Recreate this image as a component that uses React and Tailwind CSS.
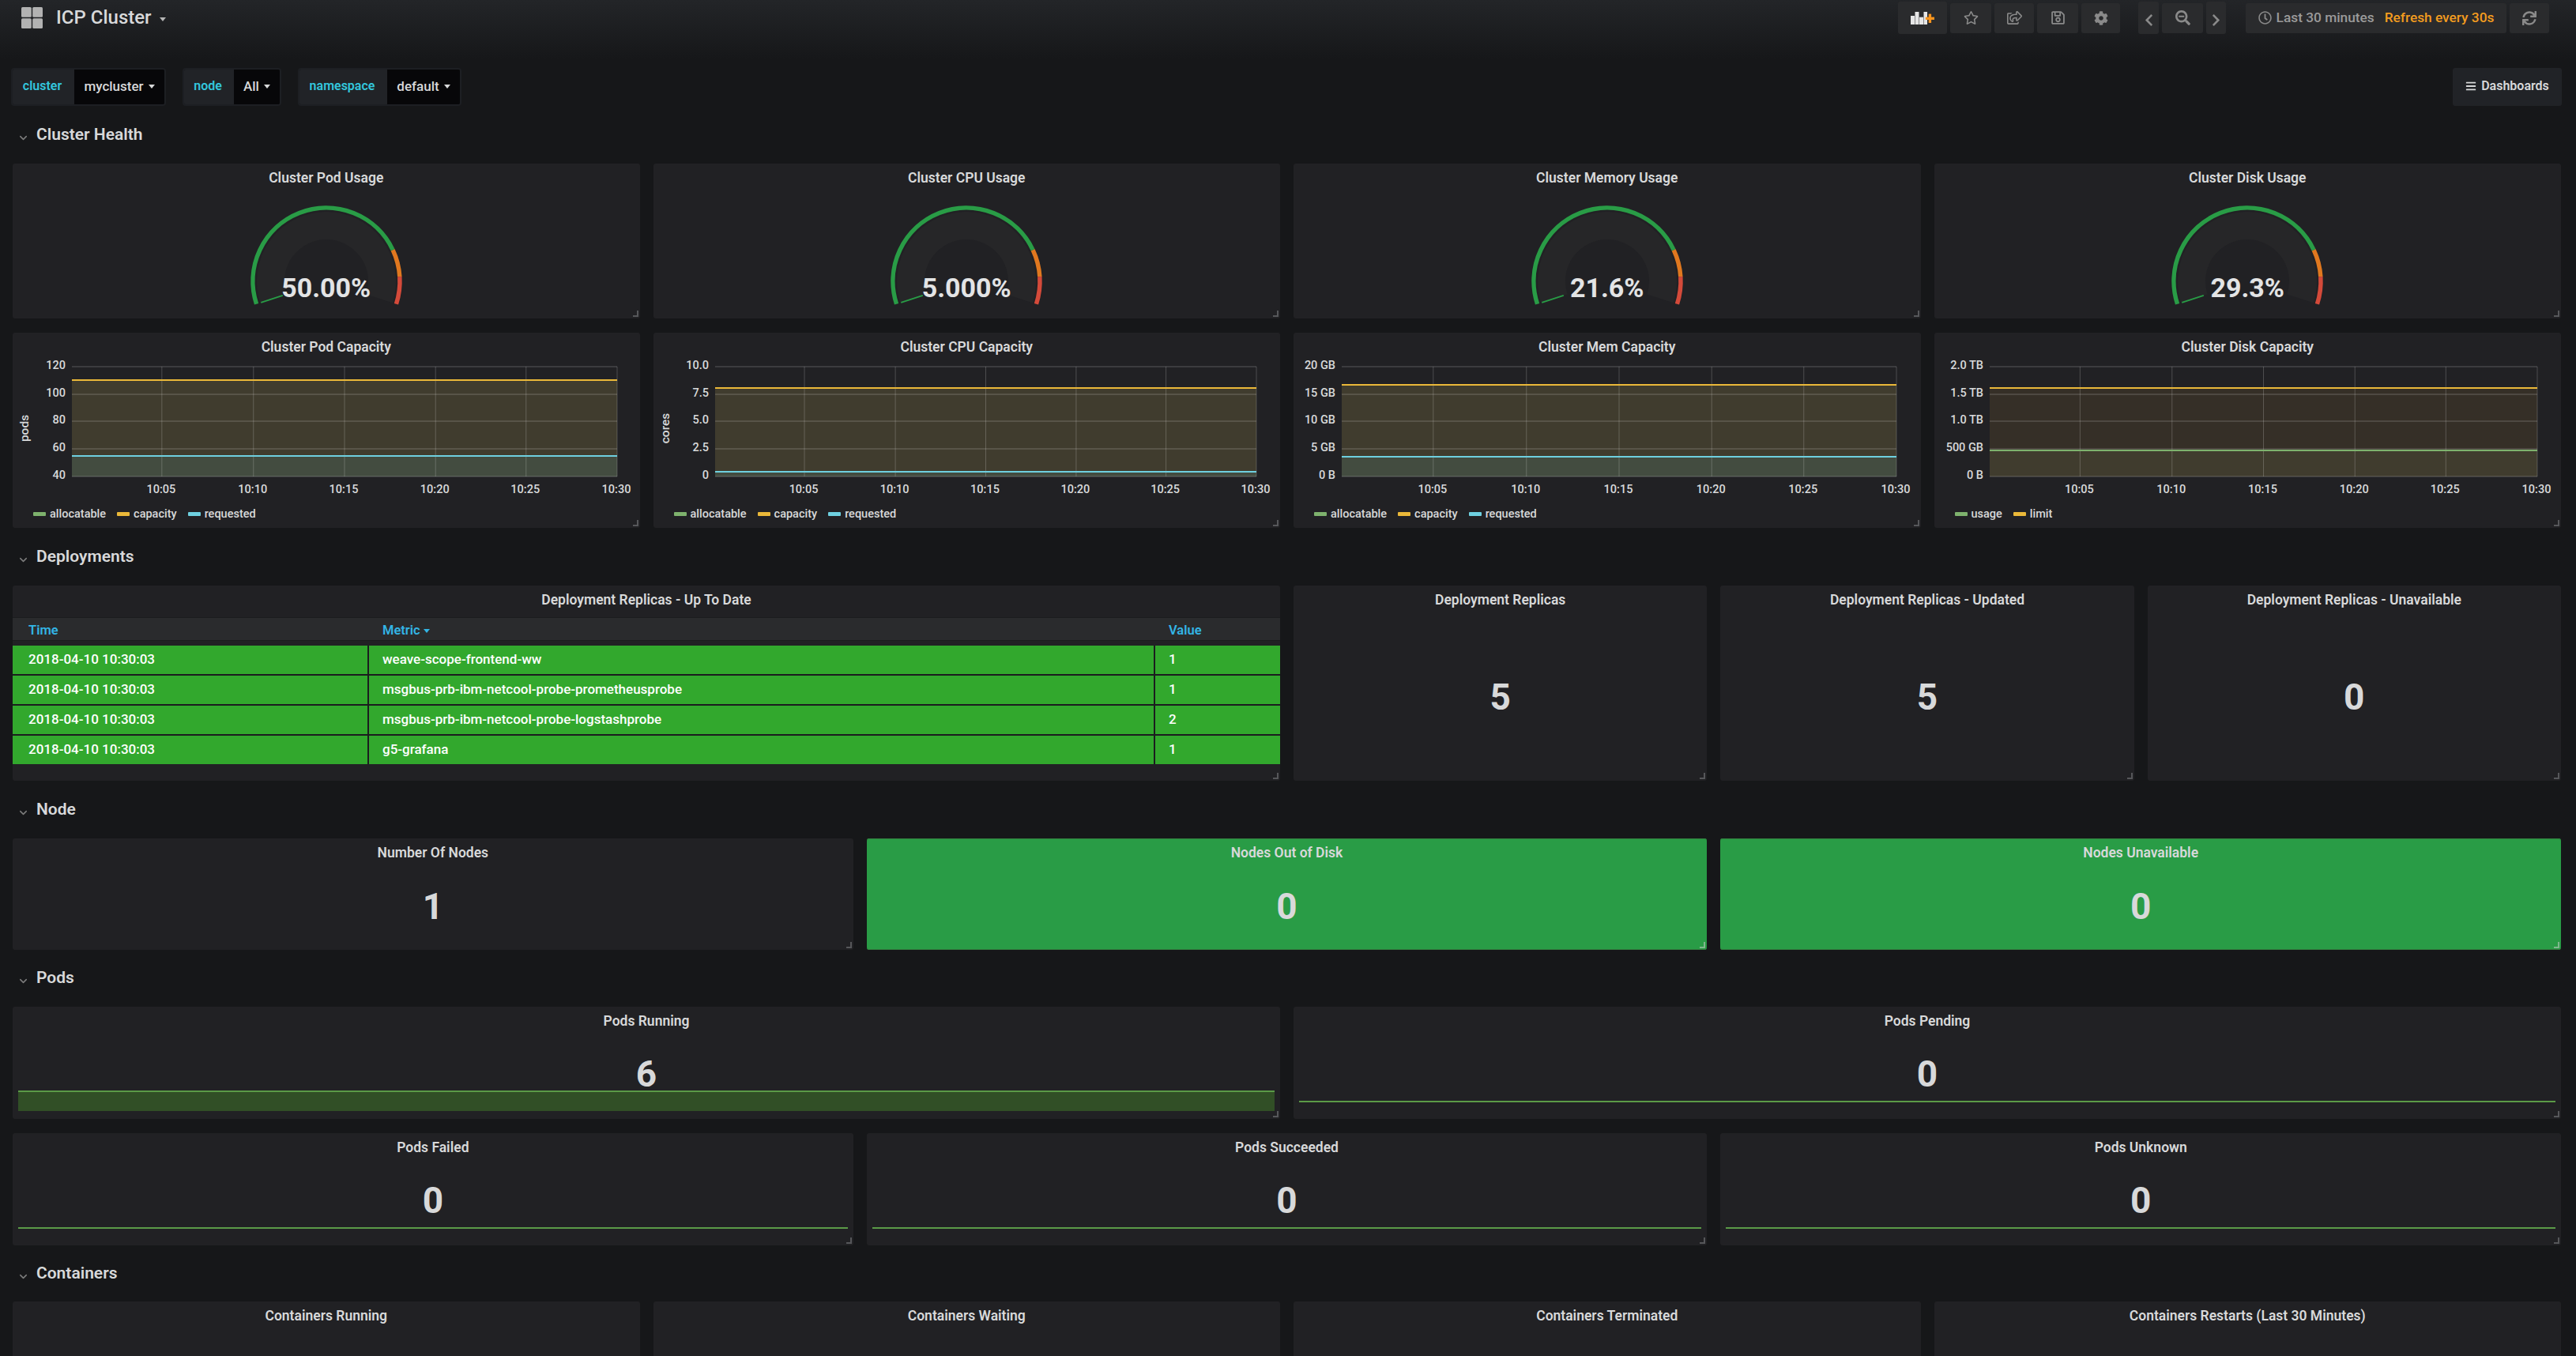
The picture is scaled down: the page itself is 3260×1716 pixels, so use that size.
import React from "react";
import { ChevronDown } from "lucide-react";
import {
  FaBars,
  FaChevronLeft,
  FaChevronRight,
  FaCog,
  FaRegClock,
  FaRegSave,
  FaRegShareSquare,
  FaRegStar,
  FaSearchMinus,
  FaSync,
} from "react-icons/fa";

const xFractions = [0.165, 0.333, 0.5, 0.667, 0.833, 1];
const xLabels = ["10:05", "10:10", "10:15", "10:20", "10:25", "10:30"];
const yTicks = [7, 42, 76, 111, 146];

const charts = [
  {
    title: "Cluster Pod Capacity",
    axis: "pods",
    ticks: ["120", "100", "80", "60", "40"],
    left: 75,
    right: 765,
    top: 24,
    low: 120,
    upperFill: "#403c2e",
    lowerFill: "#434c40",
    lowColor: "#6ed0e0",
    legend: [
      ["allocatable", "#7eb26d"],
      ["capacity", "#eab839"],
      ["requested", "#6ed0e0"],
    ],
  },
  {
    title: "Cluster CPU Capacity",
    axis: "cores",
    ticks: ["10.0", "7.5", "5.0", "2.5", "0"],
    left: 78,
    right: 763,
    top: 34,
    low: 140,
    upperFill: "#403c2e",
    lowerFill: "#434c40",
    lowColor: "#6ed0e0",
    legend: [
      ["allocatable", "#7eb26d"],
      ["capacity", "#eab839"],
      ["requested", "#6ed0e0"],
    ],
  },
  {
    title: "Cluster Mem Capacity",
    ticks: ["20 GB", "15 GB", "10 GB", "5 GB", "0 B"],
    left: 61,
    right: 763,
    top: 30,
    low: 121,
    upperFill: "#403c2e",
    lowerFill: "#434c40",
    lowColor: "#6ed0e0",
    legend: [
      ["allocatable", "#7eb26d"],
      ["capacity", "#eab839"],
      ["requested", "#6ed0e0"],
    ],
  },
  {
    title: "Cluster Disk Capacity",
    ticks: ["2.0 TB", "1.5 TB", "1.0 TB", "500 GB", "0 B"],
    left: 70,
    right: 763,
    top: 34,
    low: 113,
    upperFill: "#352f27",
    lowerFill: "#403c2e",
    lowColor: "#7eb26d",
    legend: [
      ["usage", "#7eb26d"],
      ["limit", "#eab839"],
    ],
  },
];

const gauges = [
  ["Cluster Pod Usage", "50.00%"],
  ["Cluster CPU Usage", "5.000%"],
  ["Cluster Memory Usage", "21.6%"],
  ["Cluster Disk Usage", "29.3%"],
];

const rows = [
  ["weave-scope-frontend-ww", "1"],
  ["msgbus-prb-ibm-netcool-probe-prometheusprobe", "1"],
  ["msgbus-prb-ibm-netcool-probe-logstashprobe", "2"],
  ["g5-grafana", "1"],
];

const polar = (r, deg) => {
  const rad = (deg * Math.PI) / 180;
  return [120 + r * Math.cos(rad), 113 - r * Math.sin(rad)];
};

const arc = (r, from, to) => {
  const [x1, y1] = polar(r, from);
  const [x2, y2] = polar(r, to);
  const large = from - to > 180 ? 1 : 0;
  return `M${x1} ${y1}A${r} ${r} 0 ${large} 1 ${x2} ${y2}`;
};

const Handle = ({ light }) => (
  <div
    className={`absolute right-[2px] bottom-[2px] w-[7px] h-[8px] border-r-2 border-b-2 ${
      light ? "border-[#7fb78d]" : "border-[#56575a]"
    }`}
  />
);

const Panel = ({ className, children, noHandle }) => (
  <div className={`relative bg-[#212124] rounded-[3px] overflow-hidden ${className}`}>
    {children}
    {!noHandle && <Handle />}
  </div>
);

const PanelTitle = ({ children }) => (
  <div className="h-[36px] leading-[36px] text-center text-[17.5px] font-semibold text-[#d8d9da]">
    {children}
  </div>
);

const Section = ({ title, className = "h-[73px]" }) => (
  <div className={`flex items-center pl-[6px] gap-[9px] ${className}`}>
    <ChevronDown size={15} strokeWidth={2.5} className="text-[#7b7b7b] mt-[7px]" />
    <span className="text-[21px] font-semibold text-[#d8d9da]">{title}</span>
  </div>
);

const Gauge = ({ title, value }) => (
  <Panel className="flex-1 h-[196px]">
    <PanelTitle>{title}</PanelTitle>
    <div className="relative w-[240px] h-[160px] mx-auto">
      <svg width="240" height="160" viewBox="0 0 240 160">
        <path d={arc(70.5, 198, -18)} fill="none" stroke="#262628" strokeWidth="35" />
        <path d={arc(93, 198, 25.2)} fill="none" stroke="#299c46" strokeWidth="5.5" />
        <path d={arc(93, 25.2, 3.6)} fill="none" stroke="#e0781f" strokeWidth="5.5" />
        <path d={arc(93, 3.6, -18)} fill="none" stroke="#d44a3a" strokeWidth="5.5" />
        <line
          x1={polar(87, 198)[0]}
          y1={polar(87, 198)[1]}
          x2={polar(58, 198)[0]}
          y2={polar(58, 198)[1]}
          stroke="#299c46"
          strokeWidth="2"
        />
      </svg>
      <span className="absolute left-0 right-0 top-[99px] text-center text-[34px] leading-[44px] font-bold text-[#e3e4e5]">
        {value}
      </span>
    </div>
  </Panel>
);

const Graph = ({ chart }) => {
  const { left, right, top, low } = chart;
  const width = right - left;
  return (
    <Panel className="flex-1 h-[247px]">
      <PanelTitle>{chart.title}</PanelTitle>
      <svg width="793" height="176" viewBox="0 0 793 176" className="block overflow-visible">
        <rect x={left} y={top} width={width} height={low - top} fill={chart.upperFill} />
        <rect x={left} y={low} width={width} height={146 - low} fill={chart.lowerFill} />
        {yTicks.map((y, i) => (
          <g key={y}>
            <line x1={left} x2={right} y1={y} y2={y} stroke="#fff" strokeOpacity="0.17" strokeWidth="1.6" />
            <text
              x={left - 8}
              y={y - 1}
              textAnchor="end"
              dominantBaseline="middle"
              fontSize="14.5"
              fontWeight="500"
              fill="#d8d9da"
            >
              {chart.ticks[i]}
            </text>
          </g>
        ))}
        {xFractions.map((f, i) => (
          <g key={f}>
            <line
              x1={left + f * width}
              x2={left + f * width}
              y1={7}
              y2={146}
              stroke="#fff"
              strokeOpacity="0.2"
              strokeWidth="1"
            />
            <text
              x={left + f * width - 1}
              y={163}
              textAnchor="middle"
              dominantBaseline="middle"
              fontSize="14.5"
              fontWeight="500"
              fill="#d8d9da"
            >
              {xLabels[i]}
            </text>
          </g>
        ))}
        <line x1={left} x2={right} y1={top} y2={top} stroke="#eab839" strokeWidth="2" />
        <line x1={left} x2={right} y1={low} y2={low} stroke={chart.lowColor} strokeWidth="2" />
        {chart.axis && (
          <text
            x={16}
            y={85}
            textAnchor="middle"
            dominantBaseline="middle"
            fontSize="15.5"
            fontWeight="500"
            fill="#d8d9da"
            transform="rotate(-90 16 85)"
          >
            {chart.axis}
          </text>
        )}
      </svg>
      <div className="h-[35px] flex items-center pl-[26px] gap-[14px] text-[14.5px] font-medium text-[#d8d9da]">
        {chart.legend.map(([name, color]) => (
          <div key={name} className="flex items-center gap-[5px]">
            <span className="w-[16px] h-[5px] rounded-[1px]" style={{ backgroundColor: color }} />
            <span>{name}</span>
          </div>
        ))}
      </div>
    </Panel>
  );
};

const Stat = ({ title, value, gap, spark, green, height }) => (
  <div
    className={`relative flex-1 rounded-[3px] overflow-hidden ${
      green
        ? "bg-[#299c46] shadow-[inset_0_1px_0_#33803f,inset_0_-1px_0_#33803f]"
        : "bg-[#212124]"
    }`}
    style={{ height }}
  >
    <PanelTitle>{title}</PanelTitle>
    <div
      className="h-[40px] leading-[40px] text-center text-[46px] font-bold text-[#d8d9da]"
      style={{ marginTop: gap }}
    >
      {value}
    </div>
    {spark === "area" && (
      <div className="mx-[7px] mt-[1px] h-[26px] bg-[#314f26] border-t-2 border-[#5b9a47]" />
    )}
    {spark === "line" && (
      <div className="mx-[7px] mt-[14px] h-[2px] bg-[#5b9a47]" />
    )}
    <Handle light={green} />
  </div>
);

const NavButton = ({ className, children }) => (
  <div
    className={`flex items-center justify-center bg-[#2a2b2d] rounded-[3px] text-[#8a8a8a] ${className}`}
  >
    {children}
  </div>
);

const Caret = ({ className }) => (
  <span
    className={`inline-block w-0 h-0 border-x-[4.5px] border-t-[5px] border-x-transparent ${className}`}
  />
);

const Variable = ({ label, value, labelWidth, valueWidth }) => (
  <div className="flex h-[48px] border-2 border-[#1d1f23] rounded-[4px] overflow-hidden">
    <div className={`flex items-center justify-center pb-[2px] pr-[3px] bg-[#212327] text-[16px] font-semibold text-[#33c6dc] ${labelWidth}`}>
      {label}
    </div>
    <div className={`flex items-center justify-center gap-[6px] bg-[#070709] text-[17px] font-medium text-[#d8d9da] ${valueWidth}`}>
      {value}
      <Caret className="border-t-[#d8d9da] mb-[2px]" />
    </div>
  </div>
);

const App = () => {
  return (
    <div className="h-[1716px] w-[3260px] overflow-hidden bg-[linear-gradient(180deg,#232528_0px,#161719_75px)] font-['Roboto',sans-serif]">
      <header className="h-[86px] flex items-start">
        <div className="flex items-center h-[44px] pl-[27px]">
          <svg width="27" height="27" viewBox="0 0 27 27" className="mt-[1px]">
            <rect x="0" y="0" width="12.8" height="12.8" rx="1.5" fill="#b2b2b2" />
            <rect x="14.2" y="0" width="12.8" height="12.8" rx="1.5" fill="#b2b2b2" />
            <rect x="0" y="14.2" width="12.8" height="12.8" rx="1.5" fill="#b2b2b2" />
            <rect x="14.2" y="14.2" width="12.8" height="12.8" rx="1.5" fill="#b2b2b2" />
          </svg>
          <span className="ml-[17px] text-[24px] font-medium text-[#d8d9da]">ICP Cluster</span>
          <Caret className="border-t-[#b5b5b5] ml-[10px] mt-[5px]" />
        </div>
        <div className="ml-auto flex items-center h-[45px] pr-[34px]">
          <NavButton className="w-[62px] h-[41px]">
            <svg width="30" height="16" viewBox="0 0 30 16">
              <rect x="0" y="5" width="5" height="11" fill="#e6e6e6" />
              <rect x="5.5" y="0" width="5" height="16" fill="#e6e6e6" />
              <rect x="11" y="6.7" width="5" height="9.3" fill="#e6e6e6" />
              <rect x="16.5" y="0" width="4.5" height="16" fill="#e6e6e6" />
              <rect x="18.8" y="6.6" width="11.2" height="3.4" fill="#f7941d" />
              <rect x="22.7" y="2.6" width="3.4" height="11.4" fill="#f7941d" />
            </svg>
          </NavButton>
          <NavButton className="w-[52px] h-[38px] ml-[4px]">
            <FaRegStar size={19} />
          </NavButton>
          <NavButton className="w-[50px] h-[38px] ml-[4px]">
            <FaRegShareSquare size={19} />
          </NavButton>
          <NavButton className="w-[52px] h-[38px] ml-[4px]">
            <FaRegSave size={19} />
          </NavButton>
          <NavButton className="w-[49px] h-[38px] ml-[4px]">
            <FaCog size={18} />
          </NavButton>
          <NavButton className="w-[26px] h-[41px] ml-[23px] pt-[5px]">
            <FaChevronLeft size={17} />
          </NavButton>
          <NavButton className="w-[52px] h-[38px] ml-[4px]">
            <FaSearchMinus size={19} />
          </NavButton>
          <NavButton className="w-[25px] h-[41px] ml-[4px] pt-[5px]">
            <FaChevronRight size={17} />
          </NavButton>
          <NavButton className="w-[330px] h-[38px] ml-[25px] text-[17.3px] font-medium gap-[6px]">
            <FaRegClock size={17} />
            <span className="text-[#9a9a9a]">Last 30 minutes</span>
            <span className="ml-[7px] text-[#f39c1f]">Refresh every 30s</span>
          </NavButton>
          <NavButton className="w-[50px] h-[38px] ml-[4px]">
            <FaSync size={18} />
          </NavButton>
        </div>
      </header>

      <div className="flex h-[48px] pl-[14px] pr-[18px] gap-[21px]">
        <Variable label="cluster" value="mycluster" labelWidth="w-[78px]" valueWidth="w-[114px]" />
        <Variable label="node" value="All" labelWidth="w-[63px]" valueWidth="w-[58px]" />
        <Variable label="namespace" value="default" labelWidth="w-[111px]" valueWidth="w-[92px]" />
        <div className="ml-auto flex items-center justify-center gap-[6px] w-[138px] pb-[2px] bg-[#212327] rounded-[3px] text-[16px] font-semibold text-[#d8d9da]">
          <FaBars size={14} />
          Dashboards
        </div>
      </div>

      <main className="pl-[16px] w-[3241px]">
        <Section title="Cluster Health" />
        <div className="flex gap-[17px]">
          {gauges.map(([title, value]) => (
            <Gauge key={title} title={title} value={value} />
          ))}
        </div>
        <div className="flex gap-[17px] mt-[18px]">
          {charts.map((chart) => (
            <Graph key={chart.title} chart={chart} />
          ))}
        </div>

        <Section title="Deployments" />
        <div className="grid grid-cols-2 gap-[17px]">
          <Panel className="h-[247px]">
            <PanelTitle>Deployment Replicas - Up To Date</PanelTitle>
            <div className="mt-[4px] h-[30px] pt-[5px] flex items-center bg-[#2a2b2d] text-[16.5px] font-semibold text-[#33b5e5] border-y border-[#1b1c1e]">
              <div className="w-[451px] pl-[20px]">Time</div>
              <div className="w-[995px] pl-[17px] flex items-center gap-[4px]">
                Metric
                <Caret className="border-t-[#33b5e5]" />
              </div>
              <div className="pl-[17px]">Value</div>
            </div>
            <div className="mt-[6px] flex flex-col gap-[2px] bg-[#1b1c1e]">
              {rows.map(([metric, value]) => (
                <div
                  key={metric}
                  className="flex h-[36px] items-center gap-[2px] text-[17px] font-medium text-white"
                >
                  <div className="w-[449px] h-full flex items-center pl-[20px] bg-[#32a82d]">
                    2018-04-10 10:30:03
                  </div>
                  <div className="w-[993px] h-full flex items-center pl-[17px] bg-[#32a82d]">
                    {metric}
                  </div>
                  <div className="flex-1 h-full flex items-center pl-[17px] bg-[#32a82d]">
                    {value}
                  </div>
                </div>
              ))}
            </div>
          </Panel>
          <div className="flex gap-[17px]">
            <Stat title="Deployment Replicas" value="5" gap={85} height={247} />
            <Stat title="Deployment Replicas - Updated" value="5" gap={85} height={247} />
            <Stat title="Deployment Replicas - Unavailable" value="0" gap={85} height={247} />
          </div>
        </div>

        <Section title="Node" />
        <div className="flex gap-[17px]">
          <Stat title="Number Of Nodes" value="1" gap={30} height={141} />
          <Stat title="Nodes Out of Disk" value="0" gap={30} height={141} green />
          <Stat title="Nodes Unavailable" value="0" gap={30} height={141} green />
        </div>

        <Section title="Pods" className="h-[72px]" />
        <div className="grid grid-cols-2 gap-[17px]">
          <Stat title="Pods Running" value="6" gap={29} height={142} spark="area" />
          <Stat title="Pods Pending" value="0" gap={29} height={142} spark="line" />
        </div>
        <div className="flex gap-[17px] mt-[18px]">
          <Stat title="Pods Failed" value="0" gap={29} height={142} spark="line" />
          <Stat title="Pods Succeeded" value="0" gap={29} height={142} spark="line" />
          <Stat title="Pods Unknown" value="0" gap={29} height={142} spark="line" />
        </div>

        <Section title="Containers" className="h-[71px]" />
        <div className="flex gap-[17px]">
          {["Containers Running", "Containers Waiting", "Containers Terminated", "Containers Restarts (Last 30 Minutes)"].map(
            (title) => (
              <Panel key={title} className="flex-1 h-[142px]" noHandle>
                <PanelTitle>{title}</PanelTitle>
              </Panel>
            )
          )}
        </div>
      </main>
    </div>
  );
};

export default App;
